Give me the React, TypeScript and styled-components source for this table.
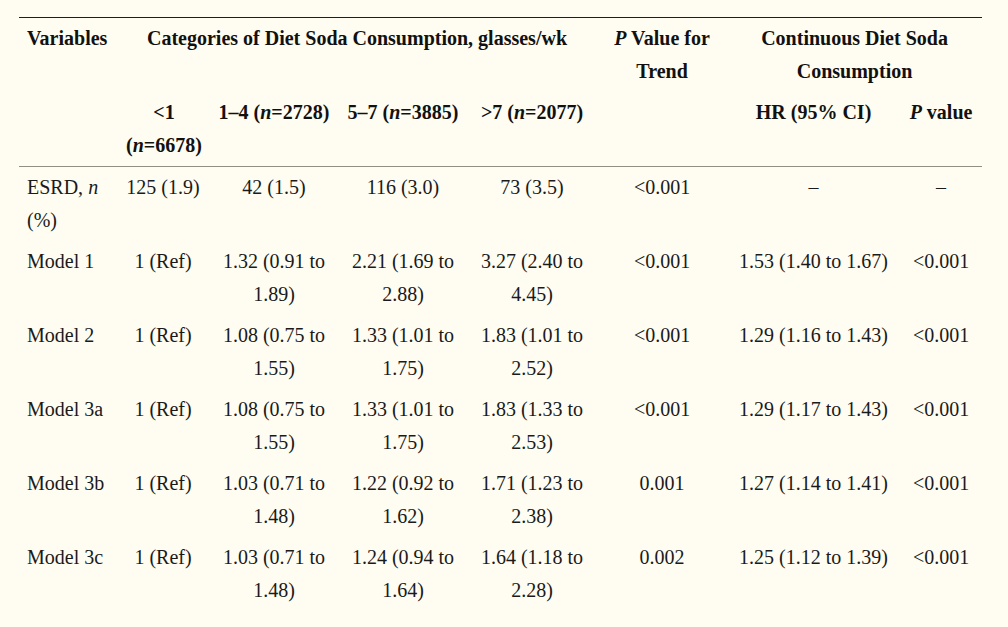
import React from "react";
import styled, { createGlobalStyle } from "styled-components";

const Global = createGlobalStyle`
  html, body {
    margin: 0;
    padding: 0;
    background: #fffdf2;
  }
  body {
    font-family: "Liberation Serif", "Times New Roman", serif;
    color: #1a1a1a;
  }
`;

const Page = styled.div`
  padding: 17px 0 0 19px;
  min-height: 610px;
  background: #fffdf2;
`;

const Table = styled.table`
  width: 963px;
  table-layout: fixed;
  border-collapse: collapse;
  font-size: 20px;
  line-height: 33px;
`;

const Head = styled.thead`
  border-top: 1px solid #1e1e1e;
  border-bottom: 1px solid #8f8f86;
`;

const Th = styled.th<{ $align?: "left" | "center" }>`
  font-weight: bold;
  color: #111;
  vertical-align: top;
  text-align: ${(p) => p.$align ?? "center"};
  padding: 4px 6px;
  &:first-child {
    padding-left: 8px;
  }
`;

const Td = styled.td<{ $align?: "left" | "center" }>`
  font-weight: normal;
  vertical-align: top;
  text-align: ${(p) => p.$align ?? "center"};
  padding: 4px 6px;
  &:first-child {
    padding-left: 8px;
  }
`;

const widths = [98, 92, 130, 128, 130, 130, 173, 82];

type Row = { label: React.ReactNode; cells: string[] };

const rows: Row[] = [
  {
    label: (
      <>
        ESRD, <i>n</i> (%)
      </>
    ),
    cells: ["125 (1.9)", "42 (1.5)", "116 (3.0)", "73 (3.5)", "<0.001", "–", "–"],
  },
  {
    label: "Model 1",
    cells: ["1 (Ref)", "1.32 (0.91 to 1.89)", "2.21 (1.69 to 2.88)", "3.27 (2.40 to 4.45)", "<0.001", "1.53 (1.40 to 1.67)", "<0.001"],
  },
  {
    label: "Model 2",
    cells: ["1 (Ref)", "1.08 (0.75 to 1.55)", "1.33 (1.01 to 1.75)", "1.83 (1.01 to 2.52)", "<0.001", "1.29 (1.16 to 1.43)", "<0.001"],
  },
  {
    label: "Model 3a",
    cells: ["1 (Ref)", "1.08 (0.75 to 1.55)", "1.33 (1.01 to 1.75)", "1.83 (1.33 to 2.53)", "<0.001", "1.29 (1.17 to 1.43)", "<0.001"],
  },
  {
    label: "Model 3b",
    cells: ["1 (Ref)", "1.03 (0.71 to 1.48)", "1.22 (0.92 to 1.62)", "1.71 (1.23 to 2.38)", "0.001", "1.27 (1.14 to 1.41)", "<0.001"],
  },
  {
    label: "Model 3c",
    cells: ["1 (Ref)", "1.03 (0.71 to 1.48)", "1.24 (0.94 to 1.64)", "1.64 (1.18 to 2.28)", "0.002", "1.25 (1.12 to 1.39)", "<0.001"],
  },
];

export default function App() {
  return (
    <>
      <Global />
      <Page>
        <Table>
          <colgroup>
            {widths.map((w, i) => (
              <col key={i} style={{ width: w }} />
            ))}
          </colgroup>
          <Head>
            <tr>
              <Th $align="left" rowSpan={2}>
                Variables
              </Th>
              <Th colSpan={4}>Categories of Diet Soda Consumption, glasses/wk</Th>
              <Th rowSpan={2}>
                <i>P</i> Value for Trend
              </Th>
              <Th colSpan={2}>Continuous Diet Soda Consumption</Th>
            </tr>
            <tr>
              <Th>
                &lt;1 (<i>n</i>=6678)
              </Th>
              <Th>
                1–4 (<i>n</i>=2728)
              </Th>
              <Th>
                5–7 (<i>n</i>=3885)
              </Th>
              <Th>
                &gt;7 (<i>n</i>=2077)
              </Th>
              <Th>HR (95% CI)</Th>
              <Th>
                <i>P</i> value
              </Th>
            </tr>
          </Head>
          <tbody>
            {rows.map((r, i) => (
              <tr key={i}>
                <Td $align="left">{r.label}</Td>
                {r.cells.map((c, j) => (
                  <Td key={j}>{c}</Td>
                ))}
              </tr>
            ))}
          </tbody>
        </Table>
      </Page>
    </>
  );
}
